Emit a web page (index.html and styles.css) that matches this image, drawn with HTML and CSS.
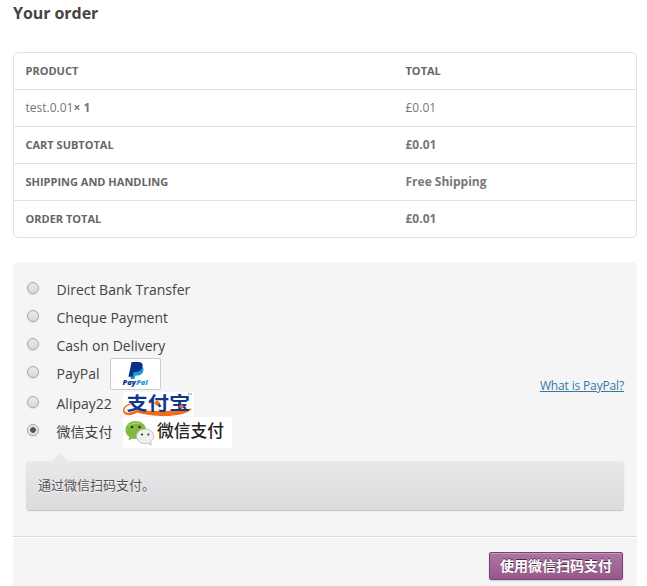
FILE: index.html
```html
<!DOCTYPE html>
<html lang="en">
<head>
<meta charset="utf-8">
<title>Your order</title>
<link rel="stylesheet" href="styles.css">
</head>
<body>
<main class="checkout">
  <h3 class="title">Your order</h3>
  <div class="order">
    <div class="row"><span class="head">Product</span><span class="head">Total</span></div>
    <div class="row"><span>test.0.01<b>× 1</b></span><span>£0.01</span></div>
    <div class="row"><span class="head">Cart Subtotal</span><b>£0.01</b></div>
    <div class="row"><span class="head">Shipping and Handling</span><b>Free Shipping</b></div>
    <div class="row"><span class="head">Order Total</span><b>£0.01</b></div>
  </div>
  <section class="payment">
    <div class="methods">
      <label class="method"><i class="radio"></i><span class="name">Direct Bank Transfer</span></label>
      <label class="method"><i class="radio"></i><span class="name">Cheque Payment</span></label>
      <label class="method"><i class="radio"></i><span class="name">Cash on Delivery</span></label>
      <div class="method paypal"><i class="radio"></i><span class="name">PayPal</span>
        <svg class="logo" width="51" height="32" viewBox="0 0 51 32">
          <rect x=".5" y=".5" width="50" height="31" rx="1.5" fill="#fff" stroke="#ccc"/>
          <path d="M22.6 7.500h6.200c4.100 0 5.400 2.700 4.400 5.800-.9 3-3 4.100-5.800 4.100h-2l-.8 3.600h-4.200z" fill="#179bd7"/>
          <path d="M21.600 4h6.600c3.800 0 5 2.300 4.200 5.100-.9 3.500-3.400 4.800-6.500 4.800h-2.300l-1 4.900h-4.200z" fill="#0a3186"/>
          <text class="pp" x="12.500" y="27" textLength="13.500" lengthAdjust="spacingAndGlyphs" fill="#0a3186">Pay</text>
          <text class="pp" x="26.200" y="27" textLength="11.500" lengthAdjust="spacingAndGlyphs" fill="#179bd7">Pal</text>
        </svg>
        <a class="what">What is PayPal?</a>
      </div>
      <div class="method alipay"><i class="radio"></i><span class="name">Alipay22</span>
        <svg class="logo" width="72" height="24" viewBox="0 0 72 24">
          <rect width="71" height="24" rx="2" fill="#fff"/>
          <path d="M11 12C5 12.500 1 15.500 1.500 18.500C2 21.500 8 21.500 14 17.500C28 20 48 19.500 69 16.500C61 26.500 30 25 14 20.500C7 25 0 23.500 0 18.500C0 14 5 11 11 11z" fill="#f26b16"/>
          <g transform="translate(3.500 17.500) scale(1.180 1)"><text class="ali">支付宝</text></g>
          <path d="M34 8l3 3-3 3-3-3zM58.500 12l2.500 2.500-2.500 2.500-2.500-2.500z" fill="#f26b16"/>
          <path d="M65 2h1.500M67.500 2h1.500" stroke="#777"/>
        </svg>
      </div>
      <div class="method wechat"><i class="radio on"></i><span class="name">微信支付</span>
        <svg class="logo" width="109" height="31" viewBox="0 0 109 31">
          <rect width="109" height="31" rx="2" fill="#fff"/>
          <path d="M12.500 4C6.500 4 2.500 8 2.500 13c0 3 1.500 5.500 4 7l-1.200 3.500 4-2c1 .3 2 .5 3.200.5 6 0 10.500-4 10.500-9s-4.500-9-10.500-9z" fill="#81b941"/>
          <path d="M4.500 10c2-4 9-6 14-3-6-1-10 0-14 3z" fill="#a9d474"/>
          <circle cx="9" cy="10" r="1.300" fill="#263c19"/><circle cx="16.500" cy="10" r="1.300" fill="#263c19"/>
          <path d="M22 12c-5 0-8.700 3.200-8.700 7.200S17 26.500 22 26.500c1 0 1.900-.1 2.700-.4l3.600 1.800-1-3c2-1.300 3.400-3.400 3.400-5.700 0-4-3.700-7.200-8.700-7.200z" fill="#efefef" stroke="#aaa" stroke-width=".7"/>
          <circle cx="19" cy="17.500" r="1.100" fill="#333"/><circle cx="25.300" cy="17.500" r="1.100" fill="#333"/>
          <text class="wx" x="34" y="20" textLength="67">微信支付</text>
        </svg>
      </div>
      <div class="box">通过微信扫码支付。</div>
    </div>
    <div class="place"><button class="submit">使用微信扫码支付</button></div>
  </section>
</main>
</body>
</html>
```
FILE: styles.css
```css
* { box-sizing: border-box; }
body {
  margin: 0;
  height: 586px;
  overflow: hidden;
  background: #fff;
  color: #777;
  font: 12px/18px "Open Sans", "Noto Sans CJK SC", sans-serif;
}
.checkout { padding: 0 10px 0 13px; }
.title {
  margin: 0;
  padding-top: 2px;
  height: 52px;
  color: #444;
  font-size: 16px;
  line-height: 22px;
  letter-spacing: -.06px;
}
.order {
  height: 186px;
  border: 1px solid #e2e2e2;
  border-radius: 5px;
}
.row {
  display: grid;
  grid-template-columns: 380px 1fr;
  align-items: center;
  height: 37px;
  padding-left: 11.5px;
  border-bottom: 1px solid #e2e2e2;
}
.row:last-child { height: 36px; border-bottom: 0; }
.head {
  color: #666;
  font-size: 11px;
  font-weight: 700;
  text-transform: uppercase;
}
.payment {
  margin-top: 24px;
  height: 324px;
  background: #f5f5f5;
  border-radius: 5px 5px 0 0;
}
.methods {
  height: 275px;
  padding: 14px 13px 0;
  border-bottom: 1px solid #d8d8d8;
}
.method {
  display: flex;
  align-items: center;
  height: 28px;
  color: #444;
  font-size: 14px;
}
.radio {
  width: 12px;
  height: 12px;
  margin: -4px 17.5px 0 1px;
  border: 1px solid #a8a8a8;
  border-radius: 50%;
  background: linear-gradient(#e8e8e8, #dadada);
  box-shadow: 0 1px 1px #ddd;
}
.radio.on { background: radial-gradient(circle, #555 0 2.5px, #e5e5e5 3.2px); }
.name { margin-right: 10.5px; }
.logo { flex: none; overflow: visible; }
.what {
  margin: 24px 0 0 auto;
  color: #3479a5;
  font-size: 12px;
  letter-spacing: -.15px;
  text-decoration: underline;
}
.alipay { height: 31px; }
.alipay .name { margin-right: 11.5px; }
.alipay .logo { margin-top: 1px; }
.wechat { height: 26px; }
.pp { font: italic 800 7.5px "Open Sans", sans-serif; }
.ali { fill: #12388e; font: 700 18px "Noto Sans CJK SC", sans-serif; }
.wx { fill: #222; font: 500 16.75px "Noto Sans CJK SC", sans-serif; }
.box {
  position: relative;
  height: 49px;
  margin-top: 16px;
  padding: 15px 12px;
  border-radius: 3px;
  background: linear-gradient(#eae8eb, #dddadd);
  box-shadow: 0 1px 1px rgba(0, 0, 0, .2);
  color: #555;
  font-size: 13px;
  text-shadow: 0 1px 0 rgba(255, 255, 255, .8);
}
.box::before {
  content: "";
  position: absolute;
  top: -8px;
  left: 26px;
  border: 8px solid transparent;
  border-top: 0;
  border-bottom-color: #eae8eb;
}
.place {
  display: flex;
  justify-content: flex-end;
  padding: 14px 14px 0;
  border-top: 1px solid #fff;
}
.submit {
  width: 134px;
  height: 28px;
  padding: 0;
  border: 1px solid #76456c;
  border-radius: 2px;
  background: linear-gradient(#ad74a2, #96588a);
  box-shadow: inset 0 1px 0 #c299ba, 0 1px 2px #ccc;
  color: #fff;
  font: 700 14px/24px "Open Sans", "Noto Sans CJK SC", sans-serif;
  text-shadow: 0 -1px 0 rgba(0, 0, 0, .6);
}
```
